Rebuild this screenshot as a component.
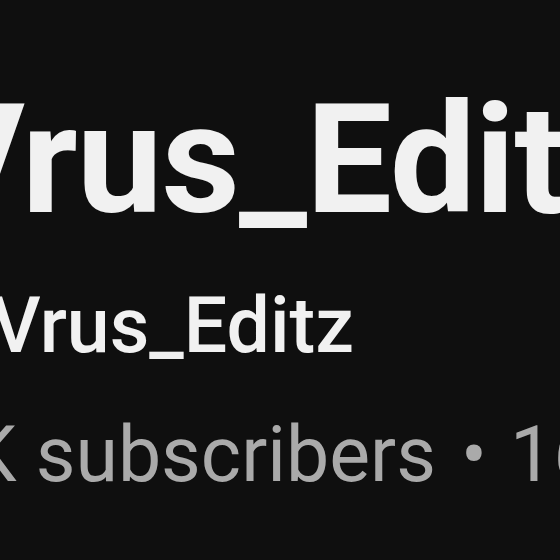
export default function App() {
  return (
    <div className="w-[560px] h-[560px] overflow-hidden bg-[#0f0f0f] relative" style={{ fontFamily: "Roboto, sans-serif" }}>
      <div className="pt-[83px]">
        <div className="whitespace-nowrap text-[153px] leading-[153px] font-bold text-[#f1f1f1] ml-[-75px] tracking-[-1px]">Vrus_Editz</div>
        <div className="mt-[52px] whitespace-nowrap text-[77px] leading-[77px] font-medium text-[#f1f1f1] ml-[-78px]">@Vrus_Editz</div>
        <div className="mt-[52px] whitespace-nowrap text-[77px] leading-[77px] font-normal text-[#aaaaaa] ml-[-75px]">
          <span>1K subscribers </span>
          <span className="ml-[6px]">•</span>
          <span className="ml-[4px]"> 16 videos</span>
        </div>
      </div>
    </div>
  );
}
